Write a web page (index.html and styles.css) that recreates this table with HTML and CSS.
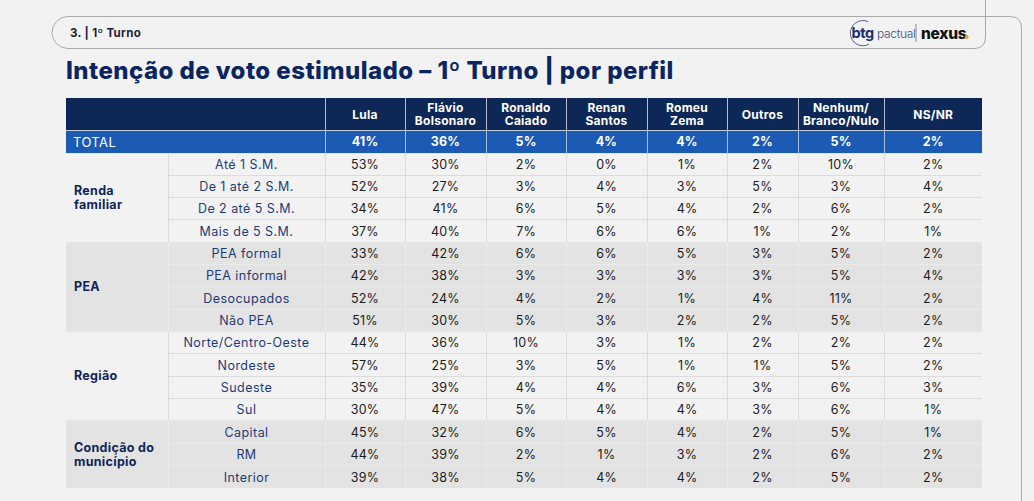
FILE: index.html
```html
<!DOCTYPE html>
<html lang="pt-BR">
<head>
<meta charset="utf-8">
<title>Intenção de voto estimulado – 1º Turno | por perfil</title>
<link rel="stylesheet" href="styles.css">
</head>
<body>
<div class="page">
  <svg class="frame" width="1034" height="501" viewBox="0 0 1034 501" aria-hidden="true">
    <path d="M1021.5 501 L1021.5 28 Q1021.5 16.5 1010 16.5 L68 16.5 A16 16 0 0 0 68 48.5 L974 48.5 Q985.5 48.5 985.5 37 L985.5 0" fill="none" stroke="#a9a9a9" stroke-width="1"/>
  </svg>
  <header class="topbar">
    <span class="crumb">3. | 1º Turno</span>
    <svg class="logo" width="122" height="28" viewBox="0 0 122 28" aria-label="btg pactual | nexus">
      <path d="M20 2.6 A12.6 12.6 0 1 0 21 25.2" fill="none" stroke="#3b4f8c" stroke-width="0.9"/>
      <text x="3.5" y="19" class="l-btg">btg</text>
      <text x="29" y="19" class="l-pac">pactual</text>
      <rect x="67.5" y="5" width="1" height="18" fill="#8a8a8a"/>
      <text x="73" y="19.5" class="l-nex">nexus</text>
      <circle cx="118.6" cy="18" r="2" fill="#f29a2e"/>
    </svg>
  </header>
  <h1 class="title">Intenção de voto estimulado – 1º Turno | por perfil</h1>
  <table class="grid">
    <colgroup>
      <col class="c-grp"><col class="c-sub"><col class="c-80"><col class="c-81"><col class="c-80"><col class="c-81"><col class="c-80"><col class="c-71"><col class="c-86"><col class="c-98">
    </colgroup>
    <thead>
      <tr class="head">
        <th colspan="2"></th>
        <th>Lula</th>
        <th>Flávio<br>Bolsonaro</th>
        <th>Ronaldo<br>Caiado</th>
        <th>Renan<br>Santos</th>
        <th>Romeu<br>Zema</th>
        <th>Outros</th>
        <th>Nenhum/<br>Branco/Nulo</th>
        <th>NS/NR</th>
      </tr>
      <tr class="total">
        <td colspan="2" class="total-label">TOTAL</td>
        <td>41%</td><td>36%</td><td>5%</td><td>4%</td><td>4%</td><td>2%</td><td>5%</td><td>2%</td>
      </tr>
    </thead>
    <tbody class="light">
      <tr><td rowspan="4" class="grp">Renda<br>familiar</td><td class="sub">Até 1 S.M.</td><td>53%</td><td>30%</td><td>2%</td><td>0%</td><td>1%</td><td>2%</td><td>10%</td><td>2%</td></tr>
      <tr><td class="sub">De 1 até 2 S.M.</td><td>52%</td><td>27%</td><td>3%</td><td>4%</td><td>3%</td><td>5%</td><td>3%</td><td>4%</td></tr>
      <tr><td class="sub">De 2 até 5 S.M.</td><td>34%</td><td>41%</td><td>6%</td><td>5%</td><td>4%</td><td>2%</td><td>6%</td><td>2%</td></tr>
      <tr><td class="sub">Mais de 5 S.M.</td><td>37%</td><td>40%</td><td>7%</td><td>6%</td><td>6%</td><td>1%</td><td>2%</td><td>1%</td></tr>
    </tbody>
    <tbody class="shade">
      <tr><td rowspan="4" class="grp">PEA</td><td class="sub">PEA formal</td><td>33%</td><td>42%</td><td>6%</td><td>6%</td><td>5%</td><td>3%</td><td>5%</td><td>2%</td></tr>
      <tr><td class="sub">PEA informal</td><td>42%</td><td>38%</td><td>3%</td><td>3%</td><td>3%</td><td>3%</td><td>5%</td><td>4%</td></tr>
      <tr><td class="sub">Desocupados</td><td>52%</td><td>24%</td><td>4%</td><td>2%</td><td>1%</td><td>4%</td><td>11%</td><td>2%</td></tr>
      <tr><td class="sub">Não PEA</td><td>51%</td><td>30%</td><td>5%</td><td>3%</td><td>2%</td><td>2%</td><td>5%</td><td>2%</td></tr>
    </tbody>
    <tbody class="light">
      <tr><td rowspan="4" class="grp">Região</td><td class="sub">Norte/Centro-Oeste</td><td>44%</td><td>36%</td><td>10%</td><td>3%</td><td>1%</td><td>2%</td><td>2%</td><td>2%</td></tr>
      <tr><td class="sub">Nordeste</td><td>57%</td><td>25%</td><td>3%</td><td>5%</td><td>1%</td><td>1%</td><td>5%</td><td>2%</td></tr>
      <tr><td class="sub">Sudeste</td><td>35%</td><td>39%</td><td>4%</td><td>4%</td><td>6%</td><td>3%</td><td>6%</td><td>3%</td></tr>
      <tr><td class="sub">Sul</td><td>30%</td><td>47%</td><td>5%</td><td>4%</td><td>4%</td><td>3%</td><td>6%</td><td>1%</td></tr>
    </tbody>
    <tbody class="shade">
      <tr><td rowspan="3" class="grp">Condição do<br>município</td><td class="sub">Capital</td><td>45%</td><td>32%</td><td>6%</td><td>5%</td><td>4%</td><td>2%</td><td>5%</td><td>1%</td></tr>
      <tr><td class="sub">RM</td><td>44%</td><td>39%</td><td>2%</td><td>1%</td><td>3%</td><td>2%</td><td>6%</td><td>2%</td></tr>
      <tr><td class="sub">Interior</td><td>39%</td><td>38%</td><td>5%</td><td>4%</td><td>4%</td><td>2%</td><td>5%</td><td>2%</td></tr>
    </tbody>
  </table>
</div>
</body>
</html>
```
FILE: styles.css
```css
* { box-sizing: border-box; }

body {
  margin: 0;
  background: #f2f2f2;
  font-family: Inter, "Open Sans", "Liberation Sans", sans-serif;
}

.page {
  position: relative;
  width: 1034px;
  height: 501px;
  overflow: hidden;
  padding-top: 16px;
}

.frame {
  position: absolute;
  left: 0;
  top: 0;
  pointer-events: none;
}

.topbar {
  margin-left: 52px;
  width: 933px;
  height: 32px;
  display: flex;
  align-items: center;
  justify-content: space-between;
  padding: 0 15px 0 18px;
}

.crumb {
  font-size: 11.5px;
  font-weight: 700;
  color: #1d1f3a;
  letter-spacing: 0.35px;
  padding-top: 2px;
}

.logo {
  display: block;
  margin-top: 1px;
}

.l-btg {
  font-family: Inter, "Liberation Sans", sans-serif;
  font-size: 14.5px;
  font-weight: 700;
  fill: #1e2f6b;
  letter-spacing: -0.4px;
}

.l-pac {
  font-family: Inter, "Liberation Sans", sans-serif;
  font-size: 12px;
  font-weight: 300;
  fill: #3e4f84;
  letter-spacing: -0.3px;
}

.l-nex {
  font-family: Inter, "Liberation Sans", sans-serif;
  font-size: 15.5px;
  font-weight: 800;
  fill: #111111;
  letter-spacing: -0.3px;
}

.title {
  margin: 9px 0 0 66px;
  font-size: 24px;
  line-height: 28px;
  font-weight: 800;
  color: #0b2560;
  letter-spacing: 0.45px;
}

.grid {
  margin: 13px 0 0 66px;
  width: 916px;
  table-layout: fixed;
  border-collapse: collapse;
  font-size: 12.5px;
  letter-spacing: 0.2px;
}

.c-grp { width: 102px; }
.c-sub { width: 157px; }
.c-80 { width: 80px; }
.c-81 { width: 81px; }
.c-71 { width: 71px; }
.c-86 { width: 86px; }
.c-98 { width: 98px; }

.grid td,
.grid th {
  padding: 0;
  text-align: center;
  vertical-align: middle;
}

.head th {
  height: 32px;
  background: #0d2757;
  color: #ffffff;
  font-weight: 700;
  font-size: 12px;
  line-height: 13.5px;
  letter-spacing: 0.25px;
  border-left: 1px solid #b3bccc;
  padding-top: 1px;
}

.head th:first-child { border-left: none; }

.total td {
  height: 23px;
  background: #1c5bb4;
  color: #ffffff;
  font-weight: 700;
  font-size: 12.5px;
  border-left: 1px solid #a9bcd9;
  border-top: 1px solid #c4cedd;
}

.total td:first-child { border-left: none; }

.total .total-label {
  text-align: left;
  padding-left: 7px;
  font-weight: 400;
  font-size: 13px;
  letter-spacing: 0.4px;
}

tbody td {
  height: 22.33px;
  color: #1b1b1b;
  border-top: 1px solid #dcdcdc;
  border-left: 1px solid #dcdcdc;
}

tbody tr:first-child td { border-top: 1px solid #e6e6e6; }

.light td { background: #f2f2f2; }

.shade td {
  background: #e3e3e3;
  border-color: #ebebeb;
}

.grid td.grp {
  text-align: left;
  padding-left: 8px;
  font-weight: 700;
  color: #0e2558;
  line-height: 14px;
  border-left: none;
  letter-spacing: 0.3px;
}

.grid td.sub {
  color: #1f3a78;
  letter-spacing: 0.45px;
}
```
